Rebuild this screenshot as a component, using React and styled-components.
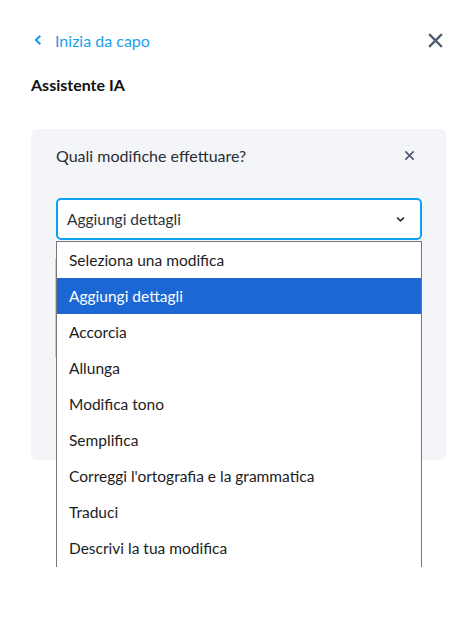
import React from "react";
import styled, { createGlobalStyle } from "styled-components";

const GlobalStyle = createGlobalStyle`
  html, body {
    margin: 0;
    padding: 0;
    background: #ffffff;
    font-family: Lato, "Liberation Sans", sans-serif;
    color: #1f2329;
  }
  * { box-sizing: border-box; }
`;

const OPTIONS = [
  "Seleziona una modifica",
  "Aggiungi dettagli",
  "Accorcia",
  "Allunga",
  "Modifica tono",
  "Semplifica",
  "Correggi l'ortografia e la grammatica",
  "Traduci",
  "Descrivi la tua modifica",
];

const Page = styled.div`
  width: 451px;
  height: 618px;
  padding: 27px 5px 0 31px;
`;

const TopBar = styled.div`
  display: flex;
  align-items: center;
  justify-content: space-between;
  height: 26px;
`;

const BackLink = styled.a`
  display: flex;
  align-items: center;
  gap: 11px;
  color: #1a9ff0;
  font-size: 16px;
  text-decoration: none;
  padding-left: 1px;
`;

const IconButton = styled.button`
  display: flex;
  align-items: center;
  justify-content: center;
  background: none;
  border: none;
  padding: 0;
  color: ${(p) => p.color || "#4b5a6c"};
  width: ${(p) => p.size}px;
  height: ${(p) => p.size}px;
`;

const Title = styled.h2`
  margin: 22px 0 0;
  font-size: 16px;
  font-weight: 700;
  color: #111;
  line-height: 20px;
`;

const Card = styled.div`
  position: relative;
  margin-top: 34px;
  width: 415px;
  height: 331px;
  background: #f4f5f9;
  border-radius: 6px;
  padding: 15px 24px 0 25px;
`;

const CardHeader = styled.div`
  display: flex;
  align-items: center;
  justify-content: space-between;
  height: 22px;
  padding-right: 6px;
`;

const Question = styled.span`
  font-size: 16px;
  color: #2a2e33;
`;

const SelectBox = styled.div`
  margin-top: 32px;
  height: 42px;
  width: 366px;
  border: 2px solid #0ea0f5;
  border-radius: 5px;
  background: #fff;
  display: flex;
  align-items: center;
  justify-content: space-between;
  padding: 0 14px 0 9px;
  font-size: 15.5px;
  color: #2e3338;
`;

const Field = styled.div`
  margin-top: 16px;
  margin-left: -1px;
  width: 367px;
  height: 104px;
  border: 1px solid #c9ccd2;
  border-radius: 4px;
  background: #fff;
`;

const ListBox = styled.ul`
  position: absolute;
  left: 25px;
  top: 112px;
  width: 366px;
  height: 326px;
  margin: 0;
  padding: 0;
  list-style: none;
  background: #fff;
  border: 1px solid #777;
  border-bottom: none;
  overflow: hidden;
`;

const Option = styled.li`
  height: 36px;
  display: flex;
  align-items: center;
  padding-left: 12px;
  font-size: 15.5px;
  color: ${(p) => (p.$active ? "#fff" : "#1c1c1c")};
  background: ${(p) => (p.$active ? "#1b67d3" : "transparent")};
`;

const Chevron = ({ dir = "down", size = 12, width = 2 }) => (
  <svg width={size} height={size} viewBox="0 0 12 12" fill="none">
    <path
      d={dir === "down" ? "M3 4.5 L6 7.5 L9 4.5" : "M7.5 2.5 L4 6 L7.5 9.5"}
      stroke="currentColor"
      strokeWidth={width}
      strokeLinecap="square"
    />
  </svg>
);

const Cross = ({ size, width }) => (
  <svg width={size} height={size} viewBox="0 0 16 16" fill="none">
    <path d="M2 2 L14 14 M14 2 L2 14" stroke="currentColor" strokeWidth={width} />
  </svg>
);

export default function App() {
  return (
    <>
      <GlobalStyle />
      <Page>
        <TopBar>
          <BackLink href="#">
            <Chevron dir="left" size={12} width={2.2} />
            Inizia da capo
          </BackLink>
          <IconButton size={22}>
            <Cross size={17} width={2} />
          </IconButton>
        </TopBar>
        <Title>Assistente IA</Title>
        <Card>
          <CardHeader>
            <Question>Quali modifiche effettuare?</Question>
            <IconButton size={14}>
              <Cross size={11} width={2.4} />
            </IconButton>
          </CardHeader>
          <SelectBox>
            <span>Aggiungi dettagli</span>
            <Chevron dir="down" size={11} width={1.8} />
          </SelectBox>
          <Field />
          <ListBox>
            {OPTIONS.map((o, i) => (
              <Option key={o} $active={i === 1}>
                {o}
              </Option>
            ))}
          </ListBox>
        </Card>
      </Page>
    </>
  );
}
